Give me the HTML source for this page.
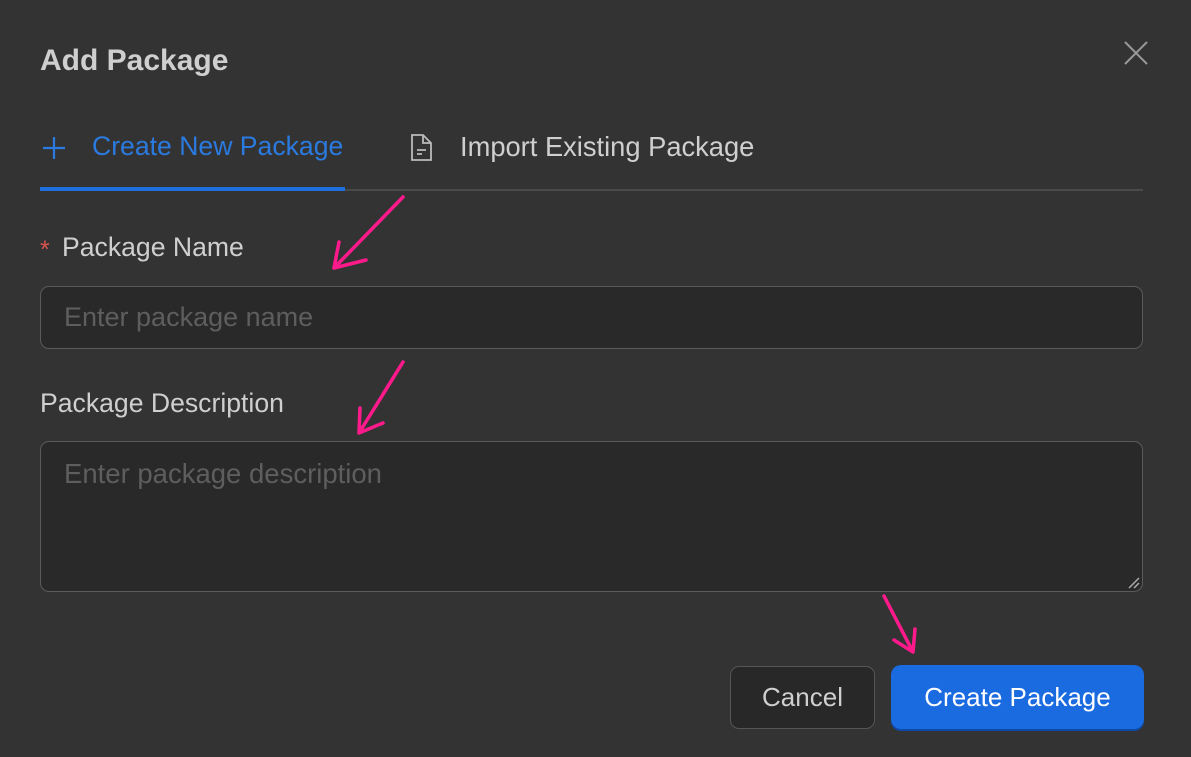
<!DOCTYPE html>
<html><head><style>
body{margin:0;width:1191px;height:757px;background:#333333;font-family:"Liberation Sans",sans-serif;position:relative;overflow:hidden}
.a{position:absolute;white-space:nowrap}
.inp{position:absolute;left:40px;width:1103px;background:#292929;border:1.5px solid #5a5a5a;border-radius:9px;box-sizing:border-box}
</style></head><body>
<div class="a" style="left:40px;top:44px;font-size:30px;font-weight:bold;color:#cfcfcf">Add Package</div>
<svg class="a" style="left:1122px;top:39px" width="28" height="28"><path d="M3 3L25 25M25 3L3 25" stroke="#999" stroke-width="2"/></svg>
<svg class="a" style="left:40px;top:134px" width="28" height="28"><path d="M14 3V25M3 14H25" stroke="#2b7ae0" stroke-width="2.2"/></svg>
<div class="a" style="left:92px;top:131px;font-size:26.6px;color:#2b7ae0">Create New Package</div>
<svg class="a" style="left:408px;top:133px" width="28" height="30"><path d="M4 2H15L23 10V27H4Z M15 2V10H23 M9 17H18 M9 21H14" fill="none" stroke="#bbb" stroke-width="1.8"/></svg>
<div class="a" style="left:460px;top:131px;font-size:27.3px;color:#cfcfcf">Import Existing Package</div>
<div class="a" style="left:40px;top:189px;width:1103px;height:2px;background:#4a4a4a"></div>
<div class="a" style="left:40px;top:187px;width:305px;height:4px;background:#1f6fdc"></div>
<div class="a" style="left:40px;top:236px;font-size:25px;color:#d9534f">*</div>
<div class="a" style="left:62px;top:232px;font-size:26.6px;color:#cfcfcf">Package Name</div>
<div class="inp" style="top:286px;height:63px"></div>
<div class="a" style="left:64px;top:302px;font-size:27px;color:#5e5e5e">Enter package name</div>
<div class="a" style="left:40px;top:388px;font-size:26.6px;color:#cfcfcf">Package Description</div>
<div class="inp" style="top:441px;height:151px"></div>
<div class="a" style="left:64px;top:458px;font-size:27.5px;color:#5e5e5e">Enter package description</div>
<svg class="a" style="left:1128px;top:577px" width="12" height="12"><path d="M1 11L11 1M6 11L11 6" stroke="#aaa" stroke-width="1.5"/></svg>
<div class="a" style="left:730px;top:666px;width:145px;height:63px;box-sizing:border-box;border:1.5px solid #555;border-radius:9px;background:#282828;color:#cfcfcf;font-size:26px;text-align:center;line-height:60px">Cancel</div>
<div class="a" style="left:891px;top:665px;width:253px;height:64px;border-radius:10px;background:#1a6ae0;color:#fff;font-size:26px;text-align:center;line-height:64px;box-shadow:0 2px 0 #0d4aa8">Create Package</div>
<svg class="a" style="left:0;top:0" width="1191" height="757" fill="none" stroke="#ff1a8c" stroke-width="3.5" stroke-linecap="round" stroke-linejoin="round">
<path d="M403 197L334 268M339 242L334 268L366 260"/>
<path d="M403 362L359 433M360 408L359 433L383 423"/>
<path d="M884 596L913 652M894 640L913 652L915 629"/>
</svg>
</body></html>
